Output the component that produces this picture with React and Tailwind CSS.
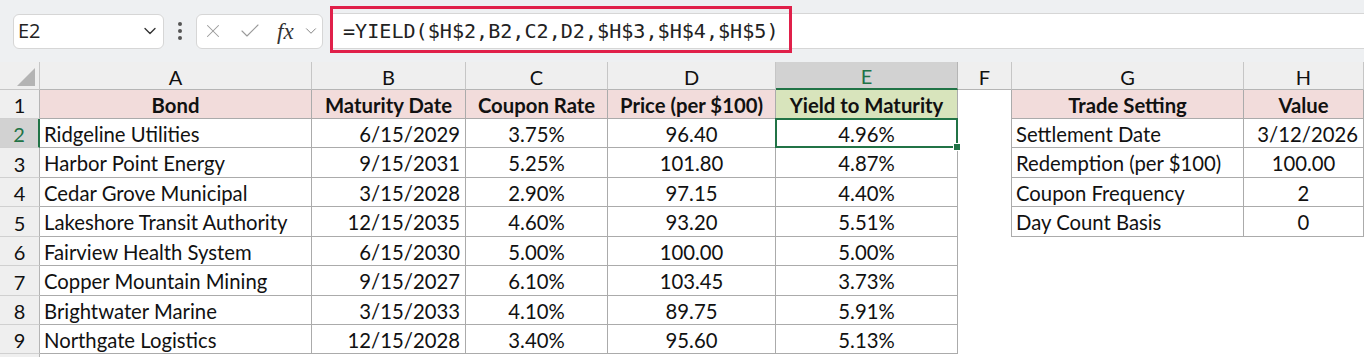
import React from 'react';
import { X, Check, ChevronDown } from 'lucide-react';

const cols = ['A', 'B', 'C', 'D', 'E', 'F', 'G', 'H'];
const rowHeights = [29, 29, 30, 29, 30, 29, 30, 29, 29, 12];

const bonds = [
  ['Ridgeline Utilities', '6/15/2029', '3.75%', '96.40', '4.96%'],
  ['Harbor Point Energy', '9/15/2031', '5.25%', '101.80', '4.87%'],
  ['Cedar Grove Municipal', '3/15/2028', '2.90%', '97.15', '4.40%'],
  ['Lakeshore Transit Authority', '12/15/2035', '4.60%', '93.20', '5.51%'],
  ['Fairview Health System', '6/15/2030', '5.00%', '100.00', '5.00%'],
  ['Copper Mountain Mining', '9/15/2027', '6.10%', '103.45', '3.73%'],
  ['Brightwater Marine', '3/15/2033', '4.10%', '89.75', '5.91%'],
  ['Northgate Logistics', '12/15/2028', '3.40%', '95.60', '5.13%'],
];

const settings = [
  ['Settlement Date', '3/12/2026', 'right'],
  ['Redemption (per $100)', '100.00', 'center'],
  ['Coupon Frequency', '2', 'center'],
  ['Day Count Basis', '0', 'center'],
];

const cellFont = "font-['Lato',sans-serif] text-[20.3px] leading-none text-[#111] pt-[2px]";

// one worksheet cell; edge draws the table border
function Cell({ children, align = 'left', fill = '', edge = false, bold = false, rightEdge = false }) {
  const a = align === 'right' ? 'justify-end pr-[5px]' : align === 'center' ? 'justify-center' : 'justify-start pl-[4px]';
  const b = edge ? 'border-r border-b border-[#ababab]' : rightEdge ? 'border-r border-[#ababab]' : '';
  return (
    <div className={`flex items-center overflow-hidden whitespace-nowrap ${a} ${b} ${fill} ${bold ? 'font-bold' : ''} ${cellFont}`}>
      {children}
    </div>
  );
}

function rowCells(r) {
  // r is 1-based sheet row
  if (r === 1) {
    return [
      <Cell key="a" align="center" bold edge fill="bg-[#f2dcdb]">Bond</Cell>,
      <Cell key="b" align="center" bold edge fill="bg-[#f2dcdb]">Maturity Date</Cell>,
      <Cell key="c" align="center" bold edge fill="bg-[#f2dcdb]">Coupon Rate</Cell>,
      <Cell key="d" align="center" bold edge fill="bg-[#f2dcdb]">Price (per $100)</Cell>,
      <Cell key="e" align="center" bold edge fill="bg-[#d8e4bc]">Yield to Maturity</Cell>,
      <Cell key="f" rightEdge />,
      <Cell key="g" align="center" bold edge fill="bg-[#f2dcdb]">Trade Setting</Cell>,
      <Cell key="h" align="center" bold edge fill="bg-[#f2dcdb]">Value</Cell>,
    ];
  }
  if (r > 9) return cols.map((c) => <Cell key={c} />);
  const b = bonds[r - 2];
  const s = settings[r - 2];
  return [
    <Cell key="a" edge>{b[0]}</Cell>,
    <Cell key="b" align="right" edge>{b[1]}</Cell>,
    <Cell key="c" align="center" edge>{b[2]}</Cell>,
    <Cell key="d" align="center" edge>{b[3]}</Cell>,
    r === 2 ? (
      <div key="e" className={`relative flex items-center justify-center border-r border-b border-[#ababab] ${cellFont}`}>
        {b[4]}
        <div className="absolute -left-px -top-px -right-px -bottom-px border-2 border-[#217346]" />
        <div className="absolute -right-[4px] -bottom-[4px] w-[8px] h-[8px] bg-[#217346] border border-white" />
      </div>
    ) : (
      <Cell key="e" align="center" edge>{b[4]}</Cell>
    ),
    <Cell key="f" rightEdge={!!s} />,
    s ? <Cell key="g" edge>{s[0]}</Cell> : <Cell key="g" />,
    s ? <Cell key="h" align={s[2]} edge>{s[1]}</Cell> : <Cell key="h" />,
  ];
}

export default function App() {
  return (
    <div className="w-[1364px] h-[357px] overflow-hidden bg-white">
      {/* ─── Formula bar ─── */}
      <div className="h-[62px] bg-[#eef0f2] flex items-center pl-[13px] gap-0">
        <div className="w-[151px] h-[35px] bg-white border border-[#d6d6d6] rounded-[6px] flex items-center justify-between pl-[4px] pr-[3px]">
          <span className="font-['Open_Sans',sans-serif] text-[20px] text-[#222]">E2</span>
          <ChevronDown size={20} strokeWidth={1.6} className="text-[#333]" />
        </div>
        <div className="w-[32px] flex flex-col items-center gap-[3px]">
          <span className="w-[4px] h-[4px] rounded-full bg-[#555]" />
          <span className="w-[4px] h-[4px] rounded-full bg-[#555]" />
          <span className="w-[4px] h-[4px] rounded-full bg-[#555]" />
        </div>
        <div className="w-[127px] h-[35px] bg-white border border-[#d6d6d6] rounded-[6px] flex items-center pl-[5px]">
          <X size={22} strokeWidth={1.1} className="text-[#9a9a9a]" />
          <Check size={24} strokeWidth={1.1} className="text-[#9a9a9a] ml-[14px]" />
          <span className="ml-[15px] font-['Liberation_Serif',serif] italic text-[23px] text-[#333] leading-none">fx</span>
          <ChevronDown size={18} strokeWidth={1.2} className="text-[#777] ml-[8px]" />
        </div>
        <div className="flex-1 relative h-[36px] ml-[8px] bg-white border-t border-b border-l border-[#d6d6d6] flex items-center">
          <div className="absolute left-[-2px] top-[-8px] w-[462px] h-[47px] border-[3px] border-[#e0204a]" />
          <span className="pl-[11px] font-['DejaVu_Sans_Mono',monospace] text-[20.1px] text-[#222]">=YIELD($H$2,B2,C2,D2,$H$3,$H$4,$H$5)</span>
        </div>
      </div>

      {/* ─── Grid ─── */}
      <div className="grid grid-cols-[40px_272px_154px_142px_168px_182px_54px_232px_120px]">
        {/* column header row */}
        <div className="h-[28px] bg-[#efefef] border-r border-b border-[#c6c6c6] relative">
          <svg className="absolute left-0 top-0" width="40" height="28" viewBox="0 0 40 28">
            <polygon points="35,6 35,24 17,24" fill="#b4b4b4" />
          </svg>
        </div>
        {cols.map((c) => (
          <div
            key={c}
            className={`h-[28px] flex items-center justify-center font-['Lato',sans-serif] text-[20px] leading-none pt-[2px] ${
              c === 'E'
                ? 'bg-[#d2d2d2] text-[#217346] border-r border-[#b5b5b5] border-b-2 border-b-[#217346]'
                : 'bg-[#efefef] text-[#111] border-r border-[#c6c6c6] border-b border-b-[#b5b5b5]'
            }`}
          >
            {c}
          </div>
        ))}

        {rowHeights.map((h, i) => {
          const r = i + 1;
          return (
            <React.Fragment key={r}>
              <div
                style={{ height: h }}
                className={`flex items-center justify-center font-['Lato',sans-serif] text-[20px] leading-none pt-[2px] border-b border-[#d0d0d0] ${
                  r === 2
                    ? 'bg-[#d2d2d2] text-[#217346] border-r-2 border-r-[#217346]'
                    : 'bg-[#efefef] text-[#111] border-r border-r-[#b5b5b5]'
                }`}
              >
                {r < 10 ? r : ''}
              </div>
              {rowCells(r)}
            </React.Fragment>
          );
        })}
      </div>
    </div>
  );
}
